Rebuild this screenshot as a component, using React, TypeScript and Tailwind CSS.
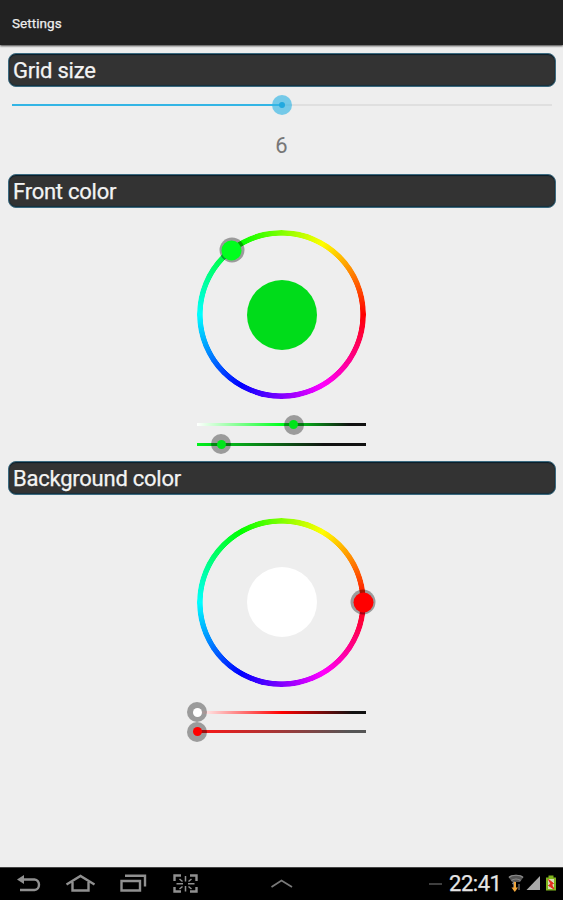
type BarProps = {
  trackClass: string;
  position: number;
  dotClass: string;
};

type ColorPickerProps = {
  centerClass: string;
  hueClass: string;
  angle: number;
  bars: BarProps[];
};

const WHEEL_RADIUS = 81.5;

function SectionTitle({ children }: { children: string }) {
  return (
    <h2 className="h-[34px] rounded-lg border border-[#3b6a80] bg-[#333333] px-[4.5px] text-[22px] leading-[33.5px] tracking-[-0.24px] text-[#f3f3f3] [-webkit-text-stroke:0.25px_#f3f3f3] shadow-[inset_0_1px_1px_#071d2b,inset_0_-1px_1px_#14303d]">
      {children}
    </h2>
  );
}

function ColorBar({ trackClass, position, dotClass }: BarProps) {
  return (
    <div className="relative flex h-[19.5px] w-[169px] items-center">
      <div className={`h-[3px] w-full ${trackClass}`} />
      <div
        className="absolute top-1/2 flex size-5 -translate-x-1/2 -translate-y-1/2 items-center justify-center rounded-full bg-black/35"
        style={{ left: position }}
      >
        <div className={`size-[9px] rounded-full ${dotClass}`} />
      </div>
    </div>
  );
}

function ColorPicker({ centerClass, hueClass, angle, bars }: ColorPickerProps) {
  const rad = (angle * Math.PI) / 180;
  const left = 84.5 + WHEEL_RADIUS * Math.cos(rad);
  const top = 84.5 - WHEEL_RADIUS * Math.sin(rad);

  return (
    <div className="flex h-[253.4px] flex-col items-center pt-[22.4px]">
      <div className="relative flex size-[169px] shrink-0 items-center justify-center">
        <div className="absolute inset-0 rounded-full bg-[conic-gradient(from_90deg,#f00,#f0f,#00f,#0ff,#0f0,#ff0,#f00)] [mask-image:radial-gradient(circle,transparent_78.5px,black_79.2px)]" />
        <div className={`size-[70px] rounded-full ${centerClass}`} />
        <div
          className="absolute flex size-[25px] -translate-x-1/2 -translate-y-1/2 items-center justify-center rounded-full bg-black/35"
          style={{ left, top }}
        >
          <div className={`size-5 rounded-full ${hueClass}`} />
        </div>
      </div>
      <div className="mt-[15.5px] flex flex-col">
        {bars.map((bar, i) => (
          <ColorBar key={i} {...bar} />
        ))}
      </div>
    </div>
  );
}

function NavigationBar() {
  return (
    <footer className="flex h-[33px] shrink-0 items-center border-t border-[#444] bg-black">
      <svg width="210" height="32" viewBox="0 868 210 32" fill="none" stroke="#909090" strokeWidth="2.4">
        {/* back */}
        <path d="M20 879.5H34.5C40.5 880 40.5 889.5 34.5 890H20" />
        <path d="M17 879.5L24 875V884Z" fill="#909090" stroke="none" />
        {/* home */}
        <path d="M66.500 884.500L80.500 876L94.500 884.500M72.500 882V890.500H88.500V882" />
        {/* recent apps */}
        <path d="M121.500 881H140V890.500H121.500ZM125 875.800H145V886.500" />
        {/* screen capture */}
        <path d="M174.500 881V875.500H181M190 875.500H196.500V881M196.500 887V891.500H190M181 891.500H174.500V887" />
        <path d="M185.500 876V881.500M185.500 886V891.500M176.500 883.700H183M188 883.700H194.500M179.500 879L182.500 881.500M191.500 879L188.500 881.500M179.500 889L182.500 886.500M191.500 889L188.500 886.500" strokeWidth="1.500" />
      </svg>
      <svg className="ml-[60px]" width="24" height="32" viewBox="270 868 24 32" fill="none" stroke="#797979" strokeWidth="1.800">
        <path d="M271.500 887L281.500 880.500L292 887" />
      </svg>
      <svg className="ml-[134px]" width="16" height="32" viewBox="428 868 16 32">
        <path d="M429 884H442" stroke="#555" strokeWidth="1.500" />
      </svg>
      <span className="ml-[5px] w-[54px] whitespace-nowrap text-[22px] leading-8 tracking-[-0.45px] text-[#e5e5e5] [-webkit-text-stroke:0.25px_#e5e5e5]">
        22:41
      </span>
      <svg className="ml-[4px]" width="56" height="32" viewBox="507 868 56 32">
        {/* wifi */}
        <path d="M508.500 877C511 874 521 874 523.500 877L520 882H512Z" fill="#555" />
        <path d="M509 877.500C512 874.500 520 874.500 523 877.500M511.500 880.500C514 878.500 518 878.500 520.500 880.500" fill="none" stroke="#8a8a8a" strokeWidth="1.200" />
        <path d="M514 882V889.500M512.500 884L514 882L515.500 884" fill="none" stroke="#888" strokeWidth="1.300" />
        <path d="M515 882V889" stroke="#f1a63b" strokeWidth="2" />
        <path d="M511.500 887.500H518L514.800 892Z" fill="#f1a63b" />
        <path d="M519 884V890" stroke="#777" strokeWidth="1.200" />
        {/* signal */}
        <path d="M540 876V890H526.500Z" fill="#aaa" />
        {/* battery */}
        <path d="M548.500 875.500H553.500V877.500H556V890.500H546V877.500H548.500Z" fill="#80b51d" />
        <path d="M548 879H554V889H548Z" fill="#d9dfb2" />
        <path d="M548.500 879.500L553.500 883.500L551.500 884.500L554 889L548.500 885.500L551 884Z" fill="#e52a1d" stroke="#e52a1d" />
      </svg>
    </footer>
  );
}

export default function App() {
  return (
    <div className="flex h-[900px] w-[563px] flex-col overflow-hidden bg-[#eeeeee] font-[Roboto,sans-serif]">
      <header className="flex h-[45px] shrink-0 items-center bg-[#222222] px-3 pt-0.5 shadow-[0_1px_2px_rgba(0,0,0,0.75)]">
        <h1 className="text-[13.5px] tracking-[0.05px] text-[#eeeeee] [-webkit-text-stroke:0.25px_#eeeeee]">Settings</h1>
      </header>

      <main className="flex-1 px-[7.5px] pt-2">
        <SectionTitle>Grid size</SectionTitle>
        <div className="h-[87px] px-1 pt-2">
          <div className="relative flex h-5 items-center">
            <div className="h-0.5 w-1/2 bg-[#33b5e5]" />
            <div className="h-0.5 w-1/2 bg-[#dfdfdf]" />
            <div className="absolute top-1/2 left-1/2 flex size-5 -translate-x-1/2 -translate-y-1/2 items-center justify-center rounded-full bg-[#33b5e5]/65">
              <div className="size-[6px] rounded-full bg-[#22a9df]" />
            </div>
          </div>
          <p className="mt-[17px] text-center text-[22px] leading-[27px] text-[#777]">6</p>
        </div>

        <SectionTitle>Front color</SectionTitle>
        <ColorPicker
          centerClass="bg-[#00dc1a]"
          hueClass="bg-[#00ff1e]"
          angle={127.5}
          bars={[
            {
              trackClass: 'bg-[linear-gradient(to_right,#fff,#00ff1e_50%,#111_90%)]',
              position: 96.5,
              dotClass: 'bg-[#00e41a]',
            },
            {
              trackClass: 'bg-[linear-gradient(to_right,#00f31c,#111_75%)]',
              position: 24,
              dotClass: 'bg-[#00e41a]',
            },
          ]}
        />

        <SectionTitle>Background color</SectionTitle>
        <ColorPicker
          centerClass="bg-white"
          hueClass="bg-[#ff0000]"
          angle={0}
          bars={[
            {
              trackClass: 'bg-[linear-gradient(to_right,#fff,#f00_50%,#111_92%)]',
              position: 0,
              dotClass: 'bg-white',
            },
            {
              trackClass: 'bg-[linear-gradient(to_right,#ff1515,#555_90%)]',
              position: 0,
              dotClass: 'bg-[#ff0000]',
            },
          ]}
        />
      </main>

      <NavigationBar />
    </div>
  );
}
